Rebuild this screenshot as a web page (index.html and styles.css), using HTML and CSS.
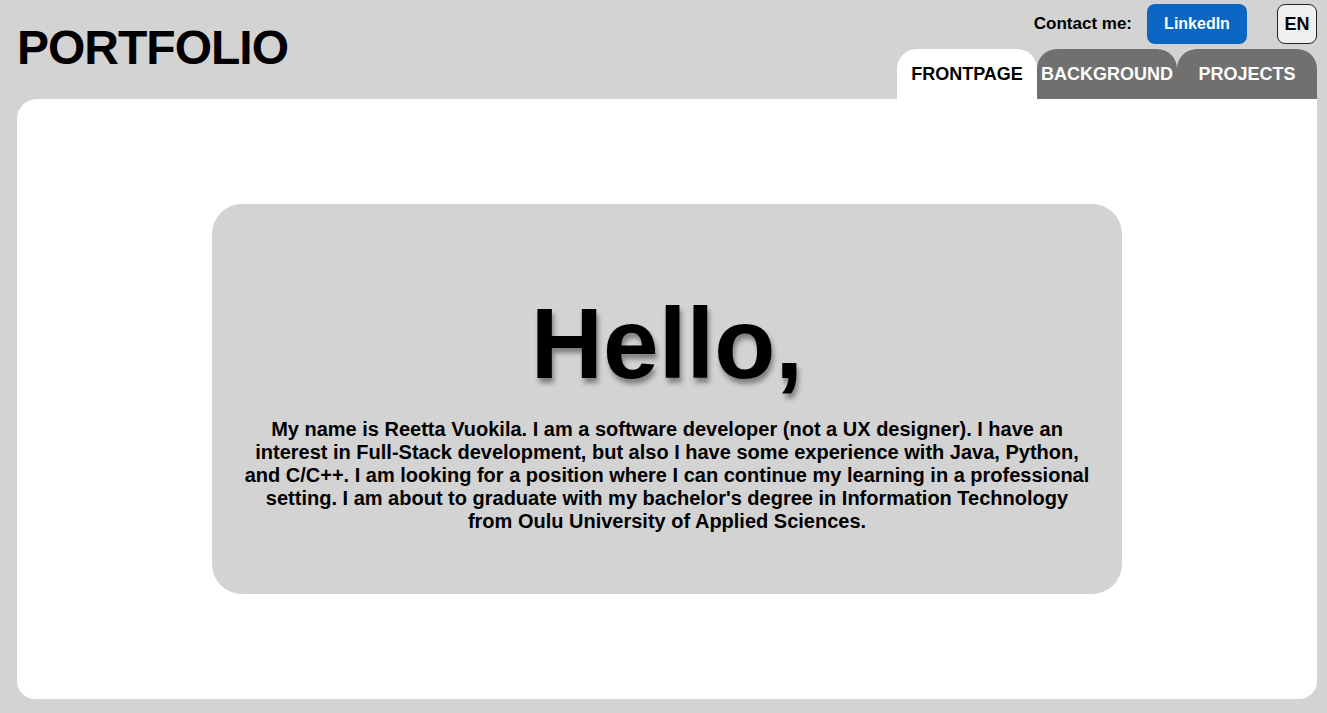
FILE: index.html
```html
<!DOCTYPE html>
<html lang="en">
<head>
<meta charset="utf-8">
<title>Portfolio</title>
<link rel="stylesheet" href="styles.css">
</head>
<body>
<header class="header">
  <h1 class="logo">PORTFOLIO</h1>
  <div class="nav-area">
    <div class="contact-row">
      <span class="contact-label">Contact me:</span>
      <a class="linkedin" href="#">LinkedIn</a>
      <button class="lang">EN</button>
    </div>
    <nav class="tabs">
      <a class="tab tab-active" href="#">FRONTPAGE</a>
      <a class="tab" href="#">BACKGROUND</a>
      <a class="tab" href="#">PROJECTS</a>
    </nav>
  </div>
</header>
<main class="panel">
  <section class="card">
    <h2 class="hello">Hello,</h2>
    <p class="intro">My name is Reetta Vuokila. I am a software developer (not a UX designer). I have an interest in Full-Stack development, but also I have some experience with Java, Python, and C/C++. I am looking for a position where I can continue my learning in a professional setting. I am about to graduate with my bachelor's degree in Information Technology from Oulu University of Applied Sciences.</p>
  </section>
</main>
</body>
</html>
```
FILE: styles.css
```css
* { box-sizing: border-box; }
html, body {
  margin: 0;
  padding: 0;
  background: #d3d3d3;
  font-family: "Liberation Sans", Arial, sans-serif;
  color: #000;
}
.header {
  display: flex;
  justify-content: space-between;
  align-items: flex-start;
  height: 99px;
  padding: 0 10px 0 17px;
}
.logo {
  margin: 21px 0 0 0;
  font-size: 48px;
  line-height: 54px;
  font-weight: 700;
  letter-spacing: -1px;
}
.nav-area {
  display: flex;
  flex-direction: column;
  align-items: flex-end;
}
.contact-row {
  display: flex;
  align-items: center;
  height: 40px;
  margin-top: 4px;
}
.contact-label {
  font-size: 17px;
  font-weight: 700;
  margin-right: 15px;
}
.linkedin {
  display: flex;
  align-items: center;
  justify-content: center;
  width: 100px;
  height: 40px;
  background: #0a66c2;
  color: #fff;
  font-size: 16px;
  font-weight: 700;
  text-decoration: none;
  border-radius: 8px;
}
.lang {
  width: 40px;
  height: 40px;
  margin-left: 30px;
  padding: 0;
  background: #f0f0f0;
  border: 1px solid #222;
  border-radius: 8px;
  font-family: "Liberation Sans", Arial, sans-serif;
  font-size: 18px;
  font-weight: 700;
  color: #000;
}
.tabs {
  display: flex;
  margin-top: 5px;
}
.tab {
  display: flex;
  align-items: center;
  justify-content: center;
  width: 140px;
  height: 50px;
  background: #707070;
  color: #fff;
  font-size: 18px;
  font-weight: 700;
  text-decoration: none;
  border-radius: 20px 20px 0 0;
  white-space: nowrap;
}
.tab-active {
  background: #fff;
  color: #000;
}
.panel {
  display: flex;
  align-items: center;
  justify-content: center;
  height: 600px;
  margin: 0 10px 0 17px;
  background: #fff;
  border-radius: 20px 0 18px 18px;
}
.card {
  display: flex;
  flex-direction: column;
  align-items: center;
  justify-content: center;
  width: 910px;
  height: 390px;
  padding: 22px 30px 0 30px;
  background: #d3d3d3;
  border-radius: 30px;
}
.hello {
  margin: 0;
  font-size: 100px;
  line-height: 110px;
  font-weight: 700;
  text-shadow: 2px 5px 5px rgba(0, 0, 0, 0.4);
}
.intro {
  margin: 20px 0 0 0;
  font-size: 20px;
  line-height: 23px;
  font-weight: 700;
  text-align: center;
}
```
